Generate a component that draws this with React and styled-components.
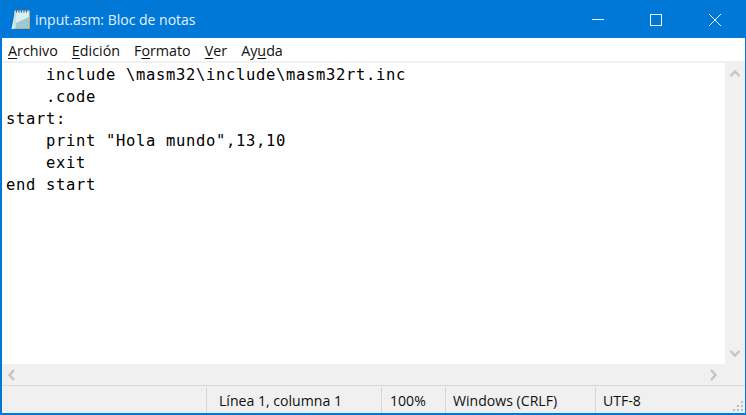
import React from 'react';
import styled, { createGlobalStyle } from 'styled-components';

const GlobalStyle = createGlobalStyle`
  html, body {
    margin: 0;
    padding: 0;
    background: #fff;
  }
`;

const Window = styled.div`
  box-sizing: border-box;
  width: 746px;
  height: 415px;
  display: flex;
  flex-direction: column;
  border: 1px solid #0078d7;
  border-left-width: 2px;
  border-bottom-width: 2px;
  overflow: hidden;
  font-family: "Open Sans", "Noto Sans", sans-serif;
`;

const TitleBar = styled.div`
  height: 37px;
  flex: none;
  display: flex;
  align-items: center;
  background: #0078d7;
  color: #fff;
  padding: 0 1px 0 9px;
`;

const Title = styled.div`
  margin-left: 4px;
  font-size: 14px;
  flex: 1;
  color: #e6f2fb;
`;

const WinButton = styled.div`
  width: 58px;
  height: 37px;
  display: flex;
  align-items: center;
  justify-content: center;

  &:last-child {
    margin-left: 1px;
  }
`;

const MenuBar = styled.div`
  height: 25px;
  flex: none;
  display: flex;
  align-items: center;
  gap: 14px;
  padding: 1px 0 0 6px;
  box-sizing: border-box;
  background: #fff;
  border-bottom: 2px solid #f0f0f0;
  font-size: 14.3px;
  color: #111;
`;

const MenuItem = styled.span`
  u {
    text-underline-offset: 2px;
  }
`;

const Editor = styled.div`
  flex: 1;
  min-height: 0;
  display: flex;
`;

const Code = styled.pre`
  flex: 1;
  margin: 0;
  padding: 1px 0 0 4px;
  font-family: "DejaVu Sans Mono", monospace;
  font-size: 15.5px;
  letter-spacing: 0.67px;
  line-height: 22px;
  color: #000;
`;

const VScroll = styled.div`
  width: 20px;
  flex: none;
  background: #f0f0f0;
  display: flex;
  flex-direction: column;
  align-items: center;
  justify-content: space-between;
  padding: 6px 0;
  box-sizing: border-box;
`;

const HScroll = styled.div`
  height: 21px;
  flex: none;
  background: #f0f0f0;
  display: flex;
  align-items: center;
  justify-content: space-between;
  padding: 0 27px 0 5px;
`;

const StatusBar = styled.div`
  height: 28px;
  flex: none;
  display: flex;
  align-items: stretch;
  background: #f0f0f0;
  border-top: 1px solid #d7d7d7;
  box-sizing: border-box;
  font-size: 14.1px;
  color: #111;
  position: relative;
`;

const StatusCell = styled.div`
  width: ${p => p.$width}px;
  flex: none;
  box-sizing: border-box;
  padding-left: ${p => p.$pad}px;
  display: flex;
  align-items: center;
  margin-top: 1px;
  border-left: ${p => (p.$first ? 'none' : '1px solid #d7d7d7')};
`;

const Grip = styled.svg`
  position: absolute;
  right: 1px;
  bottom: 1px;
`;

function Chevron({ dir }) {
  const paths = {
    up: 'M1.5 7 L6 2.5 L10.5 7',
    down: 'M1.5 2 L6 6.5 L10.5 2',
    left: 'M7 1 L2.5 6 L7 11',
    right: 'M2 1 L6.5 6 L2 11',
  };
  const vertical = dir === 'up' || dir === 'down';
  return (
    <svg width={vertical ? 12 : 9} height={vertical ? 9 : 12} viewBox={vertical ? '0 0 12 9' : '0 0 9 12'}>
      <path d={paths[dir]} fill="none" stroke="#c4c4c4" strokeWidth="2.4" />
    </svg>
  );
}

function NotepadIcon() {
  return (
    <svg width="20" height="23" viewBox="0 0 20 23">
      <path d="M4 3 L0.500 21 L5 21 Z" fill="#d5ecf2" />
      <rect x="3.500" y="2.500" width="15" height="18" fill="#c2e0e6" />
      <rect x="5" y="5" width="13" height="15" fill="#9fc9d2" />
      <path d="M5 5 H18 V9 L5 15 Z" fill="#d9eef2" />
      <path d="M3.500 20.500 H18.500 V3" fill="none" stroke="#c9a878" strokeWidth="1" />
      <path d="M5.500 1 V4.500 M8 1 V4.500 M10.500 1 V4.500 M13 1 V4.500 M15.500 1 V4.500" stroke="#55687a" strokeWidth="1" />
    </svg>
  );
}

export default function App() {
  const code = `    include \\masm32\\include\\masm32rt.inc
    .code
start:
    print "Hola mundo",13,10
    exit
end start`;

  return (
    <>
      <GlobalStyle />
      <Window>
        <TitleBar>
          <NotepadIcon />
          <Title>input.asm: Bloc de notas</Title>
          <WinButton>
            <svg width="12" height="2" viewBox="0 0 12 2"><rect width="12" height="1" fill="#fff" /></svg>
          </WinButton>
          <WinButton>
            <svg width="12" height="12" viewBox="0 0 12 12"><rect x="0.5" y="0.500" width="11" height="11" fill="none" stroke="#fff" /></svg>
          </WinButton>
          <WinButton>
            <svg width="12" height="12" viewBox="0 0 12 12"><path d="M0 0 L12 12 M12 0 L0 12" stroke="#fff" strokeWidth="1" /></svg>
          </WinButton>
        </TitleBar>
        <MenuBar>
          <MenuItem><u>A</u>rchivo</MenuItem>
          <MenuItem><u>E</u>dición</MenuItem>
          <MenuItem>F<u>o</u>rmato</MenuItem>
          <MenuItem><u>V</u>er</MenuItem>
          <MenuItem>Ay<u>u</u>da</MenuItem>
        </MenuBar>
        <Editor>
          <Code>{code}</Code>
          <VScroll>
            <Chevron dir="up" />
            <Chevron dir="down" />
          </VScroll>
        </Editor>
        <HScroll>
          <Chevron dir="left" />
          <Chevron dir="right" />
        </HScroll>
        <StatusBar>
          <StatusCell $first $width={204} />
          <StatusCell $width={175} $pad={12}>Línea 1, columna 1</StatusCell>
          <StatusCell $width={64} $pad={8}>100%</StatusCell>
          <StatusCell $width={150} $pad={7}>Windows (CRLF)</StatusCell>
          <StatusCell $width={150} $pad={7}>UTF-8</StatusCell>
          <Grip width="12" height="12" viewBox="0 0 12 12">
            <path d="M9 1h2v2H9z M5 5h2v2H5z M9 5h2v2H9z M1 9h2v2H1z M5 9h2v2H5z M9 9h2v2H9z" fill="#bdbdbd" />
          </Grip>
        </StatusBar>
      </Window>
    </>
  );
}
